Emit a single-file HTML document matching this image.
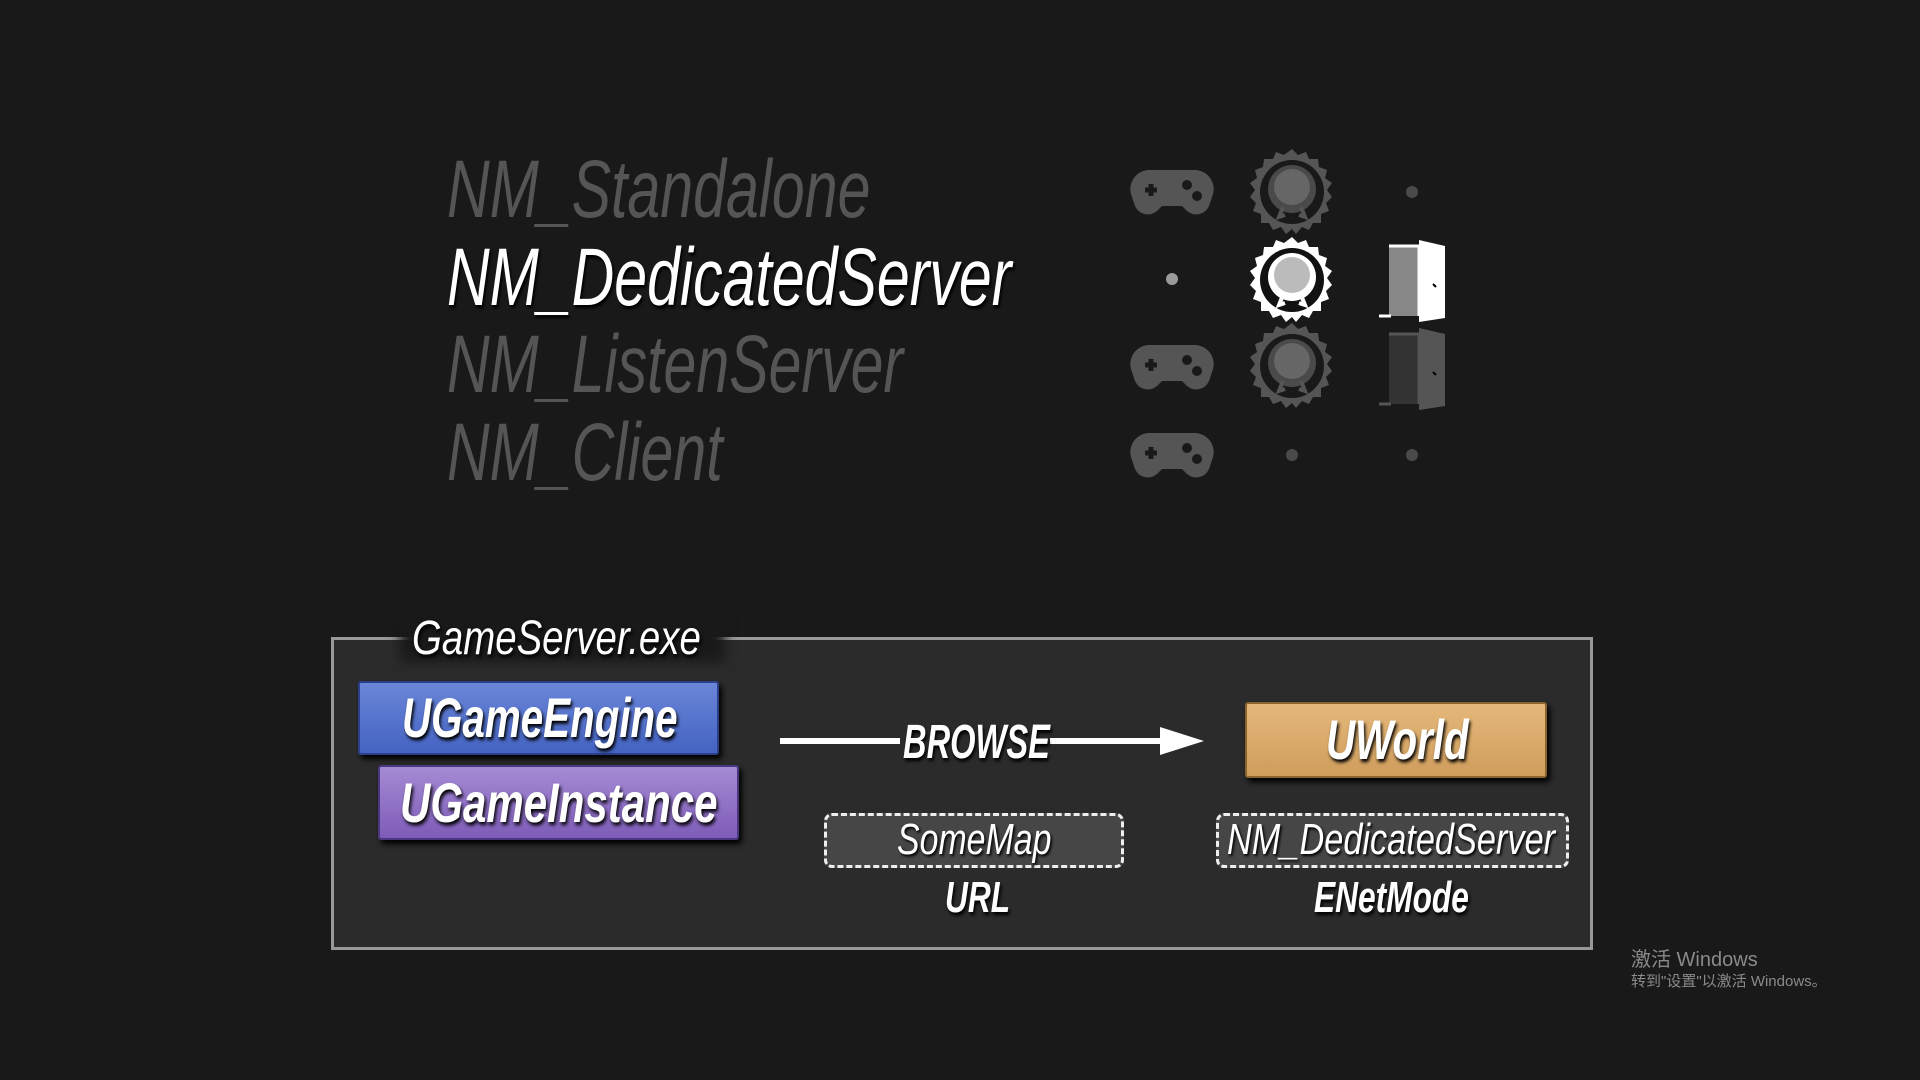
<!DOCTYPE html>
<html><head><meta charset="utf-8"><style>
*{margin:0;padding:0;box-sizing:border-box}
body{width:1920px;height:1080px;background:#191919;position:relative;overflow:hidden;font-family:"Liberation Sans",sans-serif}
.t{position:absolute;white-space:nowrap;font-style:italic;transform-origin:0 50%;line-height:1}
.row{font-size:82px;color:#555;transform:scaleX(.72)}
.row.on{color:#fff;text-shadow:2px 3px 3px #000}
.lbl{color:#fff;font-weight:bold;text-shadow:2px 3px 4px #000}
.box{position:absolute;border-radius:3px}
.dot{position:absolute;width:12px;height:12px;border-radius:50%;background:#4a4a4a}
.dash{position:absolute;border:3px dashed #eee;border-radius:8px;background:#464646}
</style></head><body>

<div class="t row" style="left:447px;top:149px">NM_Standalone</div>
<div class="t row on" style="left:447px;top:237px">NM_DedicatedServer</div>
<div class="t row" style="left:447px;top:324px">NM_ListenServer</div>
<div class="t row" style="left:447px;top:412px">NM_Client</div>

<svg style="position:absolute;left:1129px;top:168px" width="86" height="50" viewBox="0 0 86 50"><path d="M20 2h46a19 19 0 0 1 18 24l-4 12a14 14 0 0 1-22 5l-5-5H33l-5 5a14 14 0 0 1-22-5L2 26A19 19 0 0 1 20 2z" fill="#555"/><path d="M16 22h12M22 16v12" stroke="#191919" stroke-width="5"/><circle cx="58" cy="17" r="5" fill="#191919"/><circle cx="68" cy="28" r="5" fill="#191919"/></svg>
<svg style="position:absolute;left:1129px;top:343px" width="86" height="50" viewBox="0 0 86 50"><path d="M20 2h46a19 19 0 0 1 18 24l-4 12a14 14 0 0 1-22 5l-5-5H33l-5 5a14 14 0 0 1-22-5L2 26A19 19 0 0 1 20 2z" fill="#555"/><path d="M16 22h12M22 16v12" stroke="#191919" stroke-width="5"/><circle cx="58" cy="17" r="5" fill="#191919"/><circle cx="68" cy="28" r="5" fill="#191919"/></svg>
<svg style="position:absolute;left:1129px;top:431px" width="86" height="50" viewBox="0 0 86 50"><path d="M20 2h46a19 19 0 0 1 18 24l-4 12a14 14 0 0 1-22 5l-5-5H33l-5 5a14 14 0 0 1-22-5L2 26A19 19 0 0 1 20 2z" fill="#555"/><path d="M16 22h12M22 16v12" stroke="#191919" stroke-width="5"/><circle cx="58" cy="17" r="5" fill="#191919"/><circle cx="68" cy="28" r="5" fill="#191919"/></svg>

<svg style="position:absolute;left:1249px;top:149px" width="86" height="86" viewBox="0 0 86 86"><polygon points="43,0 49,6 57,3 60,10 69,10 70,18 78,21 76,29 83,34 78,41 83,48 77,54 80,62 72,65 72,74 64,74 60,81 53,78 47,85 43,80 37,85 32,78 24,81 20,74 12,74 12,65 4,62 7,54 1,48 6,41 1,34 8,29 6,21 14,18 15,10 24,10 27,3 35,6" fill="#555"/><circle cx="43" cy="43" r="32" fill="#191919"/><circle cx="43" cy="40" r="24" fill="#4a4a4a"/><circle cx="43" cy="38" r="18" fill="#666"/><path d="M34 58l-4 10 6-2M52 58l4 10-6-2" stroke="#555" stroke-width="4" fill="none"/></svg>
<svg style="position:absolute;left:1249px;top:237px" width="86" height="86" viewBox="0 0 86 86"><polygon points="43,0 49,6 57,3 60,10 69,10 70,18 78,21 76,29 83,34 78,41 83,48 77,54 80,62 72,65 72,74 64,74 60,81 53,78 47,85 43,80 37,85 32,78 24,81 20,74 12,74 12,65 4,62 7,54 1,48 6,41 1,34 8,29 6,21 14,18 15,10 24,10 27,3 35,6" fill="#fff"/><circle cx="43" cy="43" r="32" fill="#111"/><circle cx="43" cy="40" r="24" fill="#fff"/><circle cx="43" cy="38" r="18" fill="#bbb"/><path d="M34 58l-4 10 6-2M52 58l4 10-6-2" stroke="#fff" stroke-width="4" fill="none"/></svg>
<svg style="position:absolute;left:1249px;top:323px" width="86" height="86" viewBox="0 0 86 86"><polygon points="43,0 49,6 57,3 60,10 69,10 70,18 78,21 76,29 83,34 78,41 83,48 77,54 80,62 72,65 72,74 64,74 60,81 53,78 47,85 43,80 37,85 32,78 24,81 20,74 12,74 12,65 4,62 7,54 1,48 6,41 1,34 8,29 6,21 14,18 15,10 24,10 27,3 35,6" fill="#555"/><circle cx="43" cy="43" r="32" fill="#191919"/><circle cx="43" cy="40" r="24" fill="#4a4a4a"/><circle cx="43" cy="38" r="18" fill="#666"/><path d="M34 58l-4 10 6-2M52 58l4 10-6-2" stroke="#555" stroke-width="4" fill="none"/></svg>

<svg style="position:absolute;left:1375px;top:236px" width="74" height="88" viewBox="0 0 74 88"><path d="M14 10h30v70H14z" fill="#888"/><path d="M14 10h30v70" stroke="#fff" stroke-width="3" fill="none"/><path d="M4 80h12" stroke="#fff" stroke-width="3"/><path d="M44 4l26 6v72l-26 4z" fill="#fff"/><path d="M58 48l3 3" stroke="#000" stroke-width="2"/></svg>
<svg style="position:absolute;left:1375px;top:324px" width="74" height="88" viewBox="0 0 74 88"><path d="M14 10h30v70H14z" fill="#333"/><path d="M14 10h30v70" stroke="#555" stroke-width="3" fill="none"/><path d="M4 80h12" stroke="#555" stroke-width="3"/><path d="M44 4l26 6v72l-26 4z" fill="#555"/><path d="M58 48l3 3" stroke="#000" stroke-width="2"/></svg>

<div class="dot" style="left:1406px;top:186px"></div>
<div class="dot" style="left:1166px;top:273px;background:#999"></div>
<div class="dot" style="left:1286px;top:449px"></div>
<div class="dot" style="left:1406px;top:449px"></div>

<div style="position:absolute;left:331px;top:637px;width:1262px;height:313px;border:3px solid #999;background:#2b2b2b"></div>
<div style="position:absolute;left:400px;top:612px;width:325px;height:50px;background:#191919;filter:blur(6px)"></div>
<div class="t" style="left:412px;top:615px;font-size:48px;color:#fff;transform:scaleX(.80);text-shadow:2px 3px 4px #000">GameServer.exe</div>

<div class="box" style="left:358px;top:681px;width:361px;height:74px;background:linear-gradient(#6a86d8,#4463c2);border:2px solid #2c3f8a;box-shadow:3px 4px 6px #000"></div>
<div class="t lbl" style="left:402px;top:690px;font-size:56px;transform:scaleX(.72)">UGameEngine</div>
<div class="box" style="left:378px;top:765px;width:361px;height:75px;background:linear-gradient(#a58ad4,#7e5cb8);border:2px solid #4b3680;box-shadow:3px 4px 6px #000"></div>
<div class="t lbl" style="left:400px;top:775px;font-size:56px;transform:scaleX(.75)">UGameInstance</div>

<div class="box" style="left:1245px;top:702px;width:302px;height:76px;background:linear-gradient(#e4b87a,#cf9d5c);border:2px solid #8a6530;box-shadow:3px 4px 6px #000"></div>
<div class="t lbl" style="left:1326px;top:712px;font-size:56px;transform:scaleX(.72)">UWorld</div>

<svg style="position:absolute;left:778px;top:724px" width="430" height="34" viewBox="0 0 430 34"><path d="M2 17h120M272 17h118" stroke="#fff" stroke-width="6"/><path d="M382 3l44 14-44 14z" fill="#fff"/></svg>
<div class="t lbl" style="left:903px;top:719px;font-size:48px;transform:scaleX(.68)">BROWSE</div>

<div class="dash" style="left:824px;top:813px;width:300px;height:55px"></div>
<div class="t" style="left:897px;top:818px;font-size:44px;color:#fff;transform:scaleX(.77);text-shadow:2px 2px 3px #000">SomeMap</div>
<div class="dash" style="left:1216px;top:813px;width:353px;height:55px"></div>
<div class="t" style="left:1227px;top:818px;font-size:44px;color:#fff;transform:scaleX(.78);text-shadow:2px 2px 3px #000">NM_DedicatedServer</div>

<div class="t lbl" style="left:945px;top:876px;font-size:44px;transform:scaleX(.72)">URL</div>
<div class="t lbl" style="left:1314px;top:876px;font-size:44px;transform:scaleX(.72)">ENetMode</div>

<div style="position:absolute;left:1631px;top:943px;font-size:20px;color:#8a8a8a;font-family:'Liberation Sans','Noto Sans CJK SC',sans-serif">激活 Windows</div>
<div style="position:absolute;left:1631px;top:970px;font-size:15px;color:#8a8a8a;font-family:'Liberation Sans','Noto Sans CJK SC',sans-serif">转到"设置"以激活 Windows。</div>
</body></html>
